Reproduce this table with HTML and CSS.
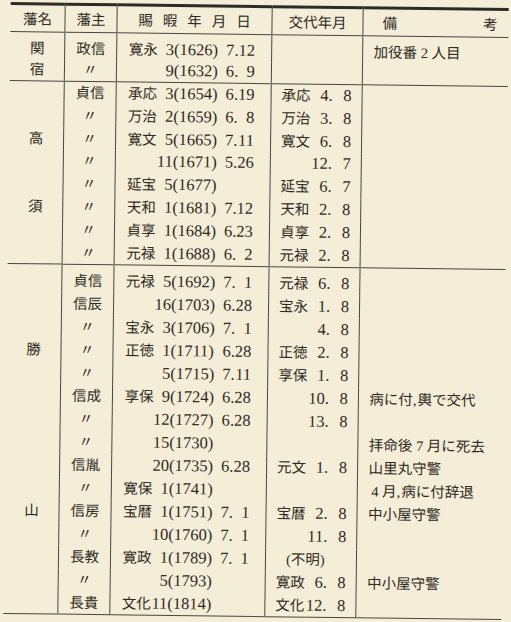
FILE: index.html
```html
<!DOCTYPE html>
<html lang="ja">
<head>
<meta charset="utf-8">
<title>藩主賜暇表</title>
<link rel="stylesheet" href="styles.css">
</head>
<body>
<table class="tbl">
  <colgroup>
    <col class="w1"><col class="w2"><col class="w3"><col class="w4"><col class="w5">
  </colgroup>
  <thead>
    <tr class="head">
      <th>藩名</th>
      <th>藩主</th>
      <th class="spaced">賜暇年月日</th>
      <th>交代年月</th>
      <th><div class="bikou"><span>備</span><span>考</span></div></th>
    </tr>
  </thead>
  <tbody class="s1">
    <tr class="first">
      <td class="c1">関</td><td class="c2">政信</td>
      <td class="c3"><span class="era">寛永</span><span class="n">3</span><span class="y">(1626)</span><span class="md"><span class="m">7</span>.<span class="d">12</span></span></td>
      <td class="c4"></td>
      <td class="c5">加役番 2 人目</td>
    </tr>
    <tr>
      <td class="c1">宿</td><td class="c2">〃</td>
      <td class="c3"><span class="era"></span><span class="n">9</span><span class="y">(1632)</span><span class="md"><span class="m">6</span>.<span class="d">9</span></span></td>
      <td class="c4"></td>
      <td class="c5"></td>
    </tr>
  </tbody>
  <tbody class="s2">
    <tr class="first">
      <td class="c1"></td><td class="c2">貞信</td>
      <td class="c3"><span class="era">承応</span><span class="n">3</span><span class="y">(1654)</span><span class="md"><span class="m">6</span>.<span class="d">19</span></span></td>
      <td class="c4"><span class="era">承応</span><span class="m">4</span><span class="dot">.</span><span class="d">8</span></td>
      <td class="c5"></td>
    </tr>
    <tr>
      <td class="c1"></td><td class="c2">〃</td>
      <td class="c3"><span class="era">万治</span><span class="n">2</span><span class="y">(1659)</span><span class="md"><span class="m">6</span>.<span class="d">8</span></span></td>
      <td class="c4"><span class="era">万治</span><span class="m">3</span><span class="dot">.</span><span class="d">8</span></td>
      <td class="c5"></td>
    </tr>
    <tr>
      <td class="c1">高</td><td class="c2">〃</td>
      <td class="c3"><span class="era">寛文</span><span class="n">5</span><span class="y">(1665)</span><span class="md"><span class="m">7</span>.<span class="d">11</span></span></td>
      <td class="c4"><span class="era">寛文</span><span class="m">6</span><span class="dot">.</span><span class="d">8</span></td>
      <td class="c5"></td>
    </tr>
    <tr>
      <td class="c1"></td><td class="c2">〃</td>
      <td class="c3"><span class="era"></span><span class="n">11</span><span class="y">(1671)</span><span class="md"><span class="m">5</span>.<span class="d">26</span></span></td>
      <td class="c4"><span class="era"></span><span class="m">12</span><span class="dot">.</span><span class="d">7</span></td>
      <td class="c5"></td>
    </tr>
    <tr>
      <td class="c1"></td><td class="c2">〃</td>
      <td class="c3"><span class="era">延宝</span><span class="n">5</span><span class="y">(1677)</span></td>
      <td class="c4"><span class="era">延宝</span><span class="m">6</span><span class="dot">.</span><span class="d">7</span></td>
      <td class="c5"></td>
    </tr>
    <tr>
      <td class="c1">須</td><td class="c2">〃</td>
      <td class="c3"><span class="era">天和</span><span class="n">1</span><span class="y">(1681)</span><span class="md"><span class="m">7</span>.<span class="d">12</span></span></td>
      <td class="c4"><span class="era">天和</span><span class="m">2</span><span class="dot">.</span><span class="d">8</span></td>
      <td class="c5"></td>
    </tr>
    <tr>
      <td class="c1"></td><td class="c2">〃</td>
      <td class="c3"><span class="era">貞享</span><span class="n">1</span><span class="y">(1684)</span><span class="md"><span class="m">6</span>.<span class="d">23</span></span></td>
      <td class="c4"><span class="era">貞享</span><span class="m">2</span><span class="dot">.</span><span class="d">8</span></td>
      <td class="c5"></td>
    </tr>
    <tr>
      <td class="c1"></td><td class="c2">〃</td>
      <td class="c3"><span class="era">元禄</span><span class="n">1</span><span class="y">(1688)</span><span class="md"><span class="m">6</span>.<span class="d">2</span></span></td>
      <td class="c4"><span class="era">元禄</span><span class="m">2</span><span class="dot">.</span><span class="d">8</span></td>
      <td class="c5"></td>
    </tr>
  </tbody>
  <tbody class="s3">
    <tr class="first">
      <td class="c1"></td><td class="c2">貞信</td>
      <td class="c3"><span class="era">元禄</span><span class="n">5</span><span class="y">(1692)</span><span class="md"><span class="m">7</span>.<span class="d">1</span></span></td>
      <td class="c4"><span class="era">元禄</span><span class="m">6</span><span class="dot">.</span><span class="d">8</span></td>
      <td class="c5"></td>
    </tr>
    <tr>
      <td class="c1"></td><td class="c2">信辰</td>
      <td class="c3"><span class="era"></span><span class="n">16</span><span class="y">(1703)</span><span class="md"><span class="m">6</span>.<span class="d">28</span></span></td>
      <td class="c4"><span class="era">宝永</span><span class="m">1</span><span class="dot">.</span><span class="d">8</span></td>
      <td class="c5"></td>
    </tr>
    <tr>
      <td class="c1"></td><td class="c2">〃</td>
      <td class="c3"><span class="era">宝永</span><span class="n">3</span><span class="y">(1706)</span><span class="md"><span class="m">7</span>.<span class="d">1</span></span></td>
      <td class="c4"><span class="era"></span><span class="m">4</span><span class="dot">.</span><span class="d">8</span></td>
      <td class="c5"></td>
    </tr>
    <tr>
      <td class="c1">勝</td><td class="c2">〃</td>
      <td class="c3"><span class="era">正徳</span><span class="n">1</span><span class="y">(1711)</span><span class="md"><span class="m">6</span>.<span class="d">28</span></span></td>
      <td class="c4"><span class="era">正徳</span><span class="m">2</span><span class="dot">.</span><span class="d">8</span></td>
      <td class="c5"></td>
    </tr>
    <tr>
      <td class="c1"></td><td class="c2">〃</td>
      <td class="c3"><span class="era"></span><span class="n">5</span><span class="y">(1715)</span><span class="md"><span class="m">7</span>.<span class="d">11</span></span></td>
      <td class="c4"><span class="era">享保</span><span class="m">1</span><span class="dot">.</span><span class="d">8</span></td>
      <td class="c5"></td>
    </tr>
    <tr>
      <td class="c1"></td><td class="c2">信成</td>
      <td class="c3"><span class="era">享保</span><span class="n">9</span><span class="y">(1724)</span><span class="md"><span class="m">6</span>.<span class="d">28</span></span></td>
      <td class="c4"><span class="era"></span><span class="m">10</span><span class="dot">.</span><span class="d">8</span></td>
      <td class="c5">病に付<span class="comma">,</span>輿で交代</td>
    </tr>
    <tr>
      <td class="c1"></td><td class="c2">〃</td>
      <td class="c3"><span class="era"></span><span class="n">12</span><span class="y">(1727)</span><span class="md"><span class="m">6</span>.<span class="d">28</span></span></td>
      <td class="c4"><span class="era"></span><span class="m">13</span><span class="dot">.</span><span class="d">8</span></td>
      <td class="c5"></td>
    </tr>
    <tr>
      <td class="c1"></td><td class="c2">〃</td>
      <td class="c3"><span class="era"></span><span class="n">15</span><span class="y">(1730)</span></td>
      <td class="c4"></td>
      <td class="c5">拝命後 7 月に死去</td>
    </tr>
    <tr>
      <td class="c1"></td><td class="c2">信胤</td>
      <td class="c3"><span class="era"></span><span class="n">20</span><span class="y">(1735)</span><span class="md"><span class="m">6</span>.<span class="d">28</span></span></td>
      <td class="c4"><span class="era">元文</span><span class="m">1</span><span class="dot">.</span><span class="d">8</span></td>
      <td class="c5">山里丸守警</td>
    </tr>
    <tr>
      <td class="c1"></td><td class="c2">〃</td>
      <td class="c3"><span class="era">寛保</span><span class="n">1</span><span class="y">(1741)</span></td>
      <td class="c4"></td>
      <td class="c5"><span class="ind">4</span> 月<span class="comma">,</span>病に付辞退</td>
    </tr>
    <tr>
      <td class="c1">山</td><td class="c2">信房</td>
      <td class="c3"><span class="era">宝暦</span><span class="n">1</span><span class="y">(1751)</span><span class="md"><span class="m">7</span>.<span class="d">1</span></span></td>
      <td class="c4"><span class="era">宝暦</span><span class="m">2</span><span class="dot">.</span><span class="d">8</span></td>
      <td class="c5">中小屋守警</td>
    </tr>
    <tr>
      <td class="c1"></td><td class="c2">〃</td>
      <td class="c3"><span class="era"></span><span class="n">10</span><span class="y">(1760)</span><span class="md"><span class="m">7</span>.<span class="d">1</span></span></td>
      <td class="c4"><span class="era"></span><span class="m">11</span><span class="dot">.</span><span class="d">8</span></td>
      <td class="c5"></td>
    </tr>
    <tr>
      <td class="c1"></td><td class="c2">長教</td>
      <td class="c3"><span class="era">寛政</span><span class="n">1</span><span class="y">(1789)</span><span class="md"><span class="m">7</span>.<span class="d">1</span></span></td>
      <td class="c4"><span class="unk">(不明)</span></td>
      <td class="c5"></td>
    </tr>
    <tr>
      <td class="c1"></td><td class="c2">〃</td>
      <td class="c3"><span class="era"></span><span class="n">5</span><span class="y">(1793)</span></td>
      <td class="c4"><span class="era">寛政</span><span class="m">6</span><span class="dot">.</span><span class="d">8</span></td>
      <td class="c5">中小屋守警</td>
    </tr>
    <tr>
      <td class="c1"></td><td class="c2">長貴</td>
      <td class="c3"><span class="era">文化</span><span class="n">11</span><span class="y">(1814)</span></td>
      <td class="c4"><span class="era">文化</span><span class="m">12</span><span class="dot">.</span><span class="d">8</span></td>
      <td class="c5"></td>
    </tr>
  </tbody>
</table>
</body>
</html>
```
FILE: styles.css
```css
html, body {
  margin: 0;
  padding: 0;
  background: #f4edd7;
}
body {
  width: 511px;
  height: 622px;
  overflow: hidden;
  color: #2f2a25;
  font-family: "Liberation Serif", "Noto Sans CJK JP", serif;
  font-size: 14.5px;
}
.tbl {
  margin: 5px 0 0 7px;
  width: 498px;
  border-collapse: collapse;
  table-layout: fixed;
  transform: rotate(0.7deg);
  transform-origin: 50% 50%;
}
.w1 { width: 54.5px; }
.w2 { width: 52px; }
.w3 { width: 155px; }
.w4 { width: 91px; }
.w5 { width: 145.5px; }

th, td {
  padding: 0;
  line-height: 18px;
  vertical-align: middle;
  white-space: nowrap;
}
th + th, td + td {
  border-left: 1px solid #4a453f;
}
.head { height: 28px; }
.head th {
  border-top: 3px solid #2e2a26;
  border-bottom: 1px solid #4a453f;
  font-weight: normal;
  text-align: center;
  padding-top: 1px;
}
.spaced { letter-spacing: 10px; text-indent: 10px; }
.bikou {
  display: flex;
  justify-content: space-between;
  padding: 0 11px 0 19px;
}

tbody tr { height: 22.85px; }
.s1 tr { height: 22px; }
.s1 tr.first { height: 27px; }
.s1 tr.first td { padding-top: 5px; }
.s2 tr.first td { border-top: 1px solid #4a453f; }
.s3 tr.first { height: 28px; }
.s3 tr.first td { border-top: 1px solid #4a453f; padding-top: 5px; }
.s3 tr { height: 23.05px; }
tbody:last-child tr:last-child td { border-bottom: 1px solid #4a453f; }

.c1, .c2 { text-align: center; }
.c3 { padding-left: 11.5px; }
.c4 { padding-left: 10px; }
.c5 { padding-left: 10.5px; }

.era {
  display: inline-block;
  width: 29px;
  font-size: 14.5px;
}
.n, .y, .md, .m, .d, .dot {
  font-size: 16.5px;
}
.c3 .n {
  display: inline-block;
  width: 16.5px;
  text-align: right;
}
.c3 .y {
  display: inline-block;
  width: 45px;
}
.c3 .md { margin-left: 7px; }
.c3 .m {
  display: inline-block;
  width: 8.3px;
}
.c3 .d {
  display: inline-block;
  width: 16.5px;
  text-align: right;
}
.c4 .m {
  display: inline-block;
  width: 18px;
  text-align: right;
}
.c4 .dot {
  display: inline-block;
  width: 14px;
}
.c4 .d {
  display: inline-block;
  width: 9px;
  text-align: right;
}
.unk {
  display: inline-block;
  margin-left: 10px;
}
.comma { font-size: 15px; margin-right: 1px; }
.ind { margin-left: 3px; }
```
